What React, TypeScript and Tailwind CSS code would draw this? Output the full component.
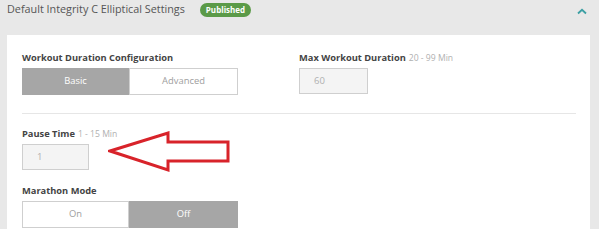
import React from "react";

const font = { fontFamily: '"Open Sans", "Noto Sans", sans-serif' };

function Label({ text, range }: { text: string; range?: string }) {
  return (
    <div className="h-[14px] text-[9.3px] leading-[14px] font-bold text-[#444]">
      {text}
      {range ? <span className="ml-[3px] text-[8.6px] font-normal text-[#b0b0b0]">{range}</span> : null}
    </div>
  );
}

function Toggle({ left, right, active }: { left: string; right: string; active: "left" | "right" }) {
  const on = "bg-[#a6a6a6] text-white border-[#a6a6a6]";
  const off = "bg-white text-[#a0a0a0] border-[#cfcfcf]";
  return (
    <div className="mt-[3px] flex h-[27px] w-[216px] text-[9.4px]">
      <div className={`flex w-[107px] items-center justify-center border ${active === "left" ? on : off}`}>
        {left}
      </div>
      <div className={`flex flex-1 items-center justify-center border ${active === "right" ? on : off}`}>
        {right}
      </div>
    </div>
  );
}

function NumInput({ value, width }: { value: string; width: string }) {
  return (
    <div
      className={`mt-[3px] flex h-[26px] items-center border border-[#cfcfcf] bg-[#f4f4f4] pl-[14px] text-[9.5px] text-[#b0b0b0] ${width}`}
    >
      {value}
    </div>
  );
}

export default function App() {
  return (
    <div className="h-[229px] w-[599px] overflow-hidden bg-[#e8e8e8]" style={font}>
      {/* header */}
      <div className="flex h-[35px] items-start pl-[7px] pr-[12px]">
        <div className="flex h-[19px] flex-1 items-center">
          <span className="text-[10.8px] text-[#555]">Default Integrity C Elliptical Settings</span>
          <span className="ml-[15px] rounded-full bg-[#5b9a48] px-[6px] text-[8px] leading-[14px] font-bold text-white">
            Published
          </span>
        </div>
        <svg width="10" height="7" viewBox="0 0 10 7" className="mt-[8px]">
          <path d="M1 5.5 L5 1.8 L9 5.5" fill="none" stroke="#3c9fa3" strokeWidth="1.8" />
        </svg>
      </div>

      {/* panel */}
      <div className="relative ml-[7px] h-[194px] w-[583px] bg-white pl-[15px] pr-[14px] pt-[16px]">
        <div className="flex">
          <div className="w-[277px]">
            <Label text="Workout Duration Configuration" />
            <Toggle left="Basic" right="Advanced" active="left" />
          </div>
          <div>
            <Label text="Max Workout Duration" range="20 - 99 Min" />
            <NumInput value="60" width="w-[69px]" />
          </div>
        </div>

        <div className="mt-[18px] h-px bg-[#e6e6e6]" />

        <div className="mt-[13px]">
          <Label text="Pause Time" range="1 - 15 Min" />
          <NumInput value="1" width="w-[67px]" />
        </div>

        <div className="mt-[14px]">
          <Label text="Marathon Mode" />
          <Toggle left="On" right="Off" active="right" />
        </div>

        {/* annotation arrow */}
        <svg className="absolute left-[101px] top-[96px]" width="124" height="44" viewBox="0 0 124 44">
          <path
            d="M2 20 L60 2 L60 11 L120 11 L120 30 L60 30 L60 39 Z"
            fill="none"
            stroke="#d8232a"
            strokeWidth="3"
            strokeLinejoin="miter"
          />
        </svg>
      </div>
    </div>
  );
}
